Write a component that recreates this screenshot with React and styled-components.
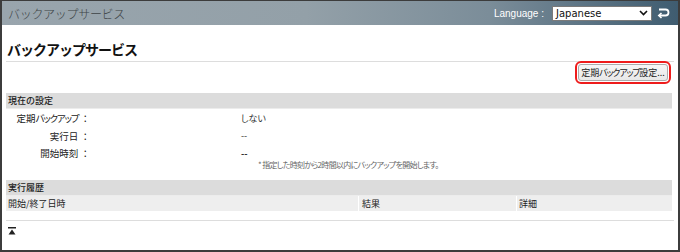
import React from 'react';
import styled, { createGlobalStyle } from 'styled-components';

const GlobalStyle = createGlobalStyle`
  html, body {
    margin: 0;
    padding: 0;
    background: #ffffff;
  }
  body {
    font-family: "Noto Sans CJK JP", "Liberation Sans", sans-serif;
    color: #222;
  }
`;

const Frame = styled.div`
  width: 680px;
  height: 252px;
  box-sizing: border-box;
  border-style: solid;
  border-color: #3c3c3c;
  border-width: 1px 2px 2px 2px;
  display: flex;
  flex-direction: column;
  overflow: hidden;
`;

const Header = styled.header`
  height: 24px;
  flex: none;
  display: flex;
  align-items: center;
  padding: 0 8px 0 6px;
  background: linear-gradient(to right, #99a5ad 0%, #93a0a8 45%, #7b8d99 72%, #3f5c70 100%);
`;

const HeaderTitle = styled.div`
  flex: 1;
  font-size: 12px;
  font-weight: 300;
  color: #3e4447;
  letter-spacing: -0.3px;
`;

const LangLabel = styled.label`
  font-family: "Liberation Sans", sans-serif;
  font-size: 10px;
  color: #ffffff;
  margin-right: 8px;
`;

const SelectBox = styled.div`
  width: 100px;
  height: 15px;
  box-sizing: border-box;
  background: #fff;
  border: 1px solid #7a7a7a;
  display: flex;
  align-items: center;
  justify-content: space-between;
  padding: 0 3px 0 3px;
  font-family: "DejaVu Sans", "Liberation Sans", sans-serif;
  font-size: 10px;
  color: #111;
`;

const ReturnButton = styled.span`
  display: flex;
  margin-left: 5px;
`;

const Main = styled.main`
  flex: 1;
  padding: 0 4px;
  display: flex;
  flex-direction: column;
`;

const PageTitle = styled.h1`
  margin: 0;
  height: 37px;
  padding: 14px 0 0 1px;
  box-sizing: border-box;
  border-bottom: 1px solid #dddddd;
  font-size: 14px;
  font-weight: bold;
  color: #111;
  letter-spacing: -1px;
`;

const Toolbar = styled.div`
  display: flex;
  justify-content: flex-end;
  padding: 2px 6px 0 0;
`;

const Button = styled.button`
  width: 90px;
  height: 17px;
  padding: 0;
  background: linear-gradient(#f6f6f6, #e8e8e8);
  border: 1px solid #acacac;
  border-radius: 3px;
  font-family: "Noto Sans CJK JP", sans-serif;
  font-size: 9px;
  white-space: nowrap;
  color: #222;
  outline: 2px solid #ee1c1c;
  outline-offset: 1px;
`;

const Kana = styled.span`
  font-feature-settings: "palt";
  letter-spacing: -1.2px;
`;

const SectionBand = styled.div`
  margin: ${(p) => p.$top}px 2px 0 0;
  height: 15px;
  background: #dcdcdc;
  border-bottom: 1px solid #ececec;
  padding-left: 2px;
  display: flex;
  align-items: center;
  font-size: 9px;
  font-weight: 500;
  color: #222;
`;

const SettingRow = styled.div`
  display: flex;
  align-items: center;
  height: ${(p) => p.$h}px;
  font-size: 9.5px;
`;

const Label = styled.div`
  width: 84px;
  text-align: right;
  color: #222;
`;

const Value = styled.div`
  margin-left: 151px;
  color: #333;
  font-size: 9px;
  font-feature-settings: "palt";
  font-weight: ${(p) => (p.$bold ? 'bold' : 'normal')};
`;

const Note = styled.div`
  margin-left: 252px;
  margin-top: -3px;
  font-size: 8px;
  font-feature-settings: "palt";
  letter-spacing: -0.7px;
  color: #666;
`;

const TableHead = styled.div`
  display: grid;
  grid-template-columns: 352px 158px 1fr;
  margin-right: 2px;
  height: 15px;
  background: #eeeeee;
`;

const HeadCell = styled.div`
  display: flex;
  align-items: center;
  padding-left: ${(p) => p.$pad}px;
  border-left: ${(p) => (p.$first ? 'none' : '1px solid #ffffff')};
  font-size: 9px;
  color: #222;
`;

const Footer = styled.div`
  margin-top: 9px;
  border-top: 1px solid #dddddd;
  padding: 6px 0 0 2px;
  display: flex;
`;

function App() {
  return (
    <>
      <GlobalStyle />
      <Frame>
        <Header>
          <HeaderTitle>バックアップサービス</HeaderTitle>
          <LangLabel>Language :</LangLabel>
          <SelectBox>
            <span>Japanese</span>
            <svg width="9" height="6" viewBox="0 0 9 6">
              <path d="M1 1 L4.5 4.5 L8 1" fill="none" stroke="#111" strokeWidth="1.6" />
            </svg>
          </SelectBox>
          <ReturnButton>
            <svg width="13" height="12" viewBox="0 0 13 12">
              <path d="M2 2.5 H8.5 A3 3 0 0 1 8.5 8.5 H2.5" fill="none" stroke="#ffffff" strokeWidth="1.8" />
              <path d="M4.5 6 L1.8 8.5 L4.5 11" fill="none" stroke="#ffffff" strokeWidth="1.6" />
            </svg>
          </ReturnButton>
        </Header>
        <Main>
          <PageTitle>バックアップサービス</PageTitle>
          <Toolbar>
            <Button>定期<Kana>バックアップ</Kana>設定...</Button>
          </Toolbar>
          <SectionBand $top={12}>現在の設定</SectionBand>
          <SettingRow $h={18}>
            <Label>定期<Kana>バックアップ</Kana> ：</Label>
            <Value>しない</Value>
          </SettingRow>
          <SettingRow $h={17}>
            <Label>実行日 ：</Label>
            <Value>--</Value>
          </SettingRow>
          <SettingRow $h={18}>
            <Label>開始時刻 ：</Label>
            <Value $bold>--</Value>
          </SettingRow>
          <Note>* 指定した時刻から2時間以内にバックアップを開始します。</Note>
          <SectionBand $top={10}>実行履歴</SectionBand>
          <TableHead>
            <HeadCell $first $pad={2}>開始/終了日時</HeadCell>
            <HeadCell $pad={3}>結果</HeadCell>
            <HeadCell $pad={2}>詳細</HeadCell>
          </TableHead>
          <Footer>
            <svg width="8" height="8" viewBox="0 0 8 8">
              <rect x="0" y="0" width="8" height="1.5" fill="#222" />
              <path d="M4 2.5 L7.5 7.5 H0.5 Z" fill="#222" />
            </svg>
          </Footer>
        </Main>
      </Frame>
    </>
  );
}

export default App;
